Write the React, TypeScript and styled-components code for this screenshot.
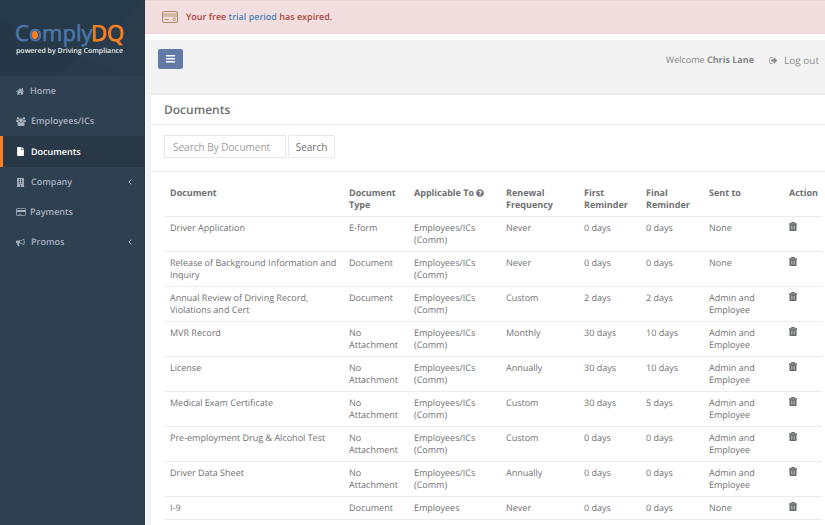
import React from "react";
import styled, { createGlobalStyle } from "styled-components";
import { FaFile, FaBuilding, FaQuestionCircle } from "react-icons/fa";

const GlobalStyle = createGlobalStyle`
  * { box-sizing: border-box; }
  html, body { margin: 0; height: 100%; overflow: hidden; }
  #root { height: 100%; }
  body {
    background: #fff;
    color: #6f7173;
    font-family: "Open Sans", "Noto Sans", sans-serif;
    font-size: 9px;
    line-height: 12px;
    text-rendering: geometricPrecision;
  }
  button, input { font: inherit; color: inherit; margin: 0; }
  a { text-decoration: none; color: inherit; }
`;

const Page = styled.div`
  display: flex;
  height: 100vh;
  overflow: hidden;
`;

const Sidebar = styled.aside`
  flex: 0 0 145px;
  background: #2f4050;
  border-right: 1px solid #26394a;
`;

const Brand = styled.header`
  height: 76px;
  padding: 20px 0 0 16px;
  background:
    linear-gradient(140deg, transparent 62%, rgba(255, 255, 255, 0.01) 62%),
    linear-gradient(25deg, rgba(0, 0, 0, 0.03) 40%, transparent 40%),
    #273a4a;
`;

const LogoSvg = styled.svg`
  display: block;
  width: 110px;
  height: 36px;
  overflow: visible;
`;

const NavList = styled.nav`
  display: flex;
  flex-direction: column;
`;

const NavItem = styled.a<{ $active?: boolean }>`
  display: flex;
  align-items: center;
  height: ${(p) => (p.$active ? 31 : 30)}px;
  padding: 0 12px 0 13px;
  border-left: 3px solid ${(p) => (p.$active ? "#f8811f" : "transparent")};
  background: ${(p) => (p.$active ? "#293846" : "transparent")};
  color: ${(p) => (p.$active ? "#fff" : "#a7b1c2")};
  font-weight: 600;
`;

const NavIcon = styled.span<{ $gap: number }>`
  display: flex;
  font-size: 9px;
  margin-right: ${(p) => p.$gap}px;
`;

const NavArrow = styled.span`
  display: flex;
  margin-left: auto;
`;

const Main = styled.main`
  flex: 1;
  min-width: 0;
  display: flex;
  flex-direction: column;
`;

const Alert = styled.div`
  display: flex;
  align-items: center;
  flex: none;
  height: 34px;
  padding: 0 17px;
  gap: 8px;
  background: #f2dede;
  border: solid #ebd3d6;
  border-width: 1px 0;
  color: #a94442;
  font-weight: 600;

  a { color: #4a7fb8; }
`;

const Content = styled.div`
  flex: 1;
  min-height: 0;
  margin: 6px 0 0 1px;
  padding-left: 5px;
  background: #f3f3f4;
`;

const TopBar = styled.div`
  display: flex;
  align-items: flex-start;
  justify-content: space-between;
  height: 53px;
  padding: 9px 6px 0 7px;
`;

const MenuButton = styled.button`
  display: flex;
  align-items: center;
  justify-content: center;
  width: 25px;
  height: 20px;
  padding: 0;
  border: 0;
  border-radius: 2px;
  background: #627aa5;
  color: #fff;
`;

const UserArea = styled.div`
  display: flex;
  align-items: center;
  gap: 15px;
  height: 22px;
  color: #888;
`;

const LogoutLink = styled.a`
  display: flex;
  align-items: center;
  gap: 6px;
  font-size: 10px;
  color: #8a8c8f;
`;

const Panel = styled.section`
  height: 100%;
  border-top: 2px solid #e7eaec;
  background: #fff;
`;

const PanelTitle = styled.h1`
  margin: 0;
  padding: 7px 13px 6px;
  border-bottom: 1px solid #e9ebed;
  font-size: 12px;
  line-height: 16px;
  font-weight: 600;
`;

const SearchForm = styled.form`
  display: flex;
  gap: 2px;
  padding: 10px 13px 13px;
  border-bottom: 1px solid #e9ebed;
  font-size: 10px;
`;

const SearchInput = styled.input`
  width: 122px;
  height: 23px;
  padding: 0 8px;
  border: 1px solid #e5e6e7;
  background: #fff;
  outline: 0;
  &::placeholder { color: #9a9c9e; opacity: 1; }
`;

const SearchButton = styled.button`
  height: 23px;
  width: 47px;
  padding: 0;
  border: 1px solid #e7eaec;
  border-radius: 2px;
  background: #fff;
`;

const TableWrap = styled.div`
  padding: 10px 3px 0 13px;
`;

const Table = styled.table`
  width: 100%;
  table-layout: fixed;
  border-collapse: separate;
  border-spacing: 0;

  th, td {
    padding: 5px 5px;
    text-align: left;
    vertical-align: top;
    border-bottom: 1px solid #ececee;
  }
  th { font-weight: 700; white-space: nowrap; }
  th:first-child, td:first-child { padding-left: 6px; }
  th svg { vertical-align: -1px; }
`;

const Col = styled.col<{ $width?: number }>`
  width: ${(p) => (p.$width ? `${p.$width}px` : "auto")};
`;

const DeleteButton = styled.button`
  display: block;
  padding: 0;
  border: 0;
  background: none;
  svg { display: block; }
`;

type GlyphProps = { d: string; size?: number; box?: number };
const Glyph = ({ d, size = 9, box = 1792 }: GlyphProps) => (
  <svg width={size} height={9} viewBox={`0 0 ${box} 1792`} fill="currentColor" aria-hidden="true">
    <path d={d} />
  </svg>
);

const HOME =
  "M1408 992v480q0 26-19 45t-45 19h-384v-384h-256v384h-384q-26 0-45-19t-19-45v-480q0-1 .5-3t.5-3l575-474 575 474q1 2 1 6zm223-69l-62 74q-8 9-21 11h-3q-13 0-21-7l-692-577-692 577q-12 8-24 7-13-2-21-11l-62-74q-8-10-7-23.5t11-21.5l719-599q32-26 76-26t76 26l244 204v-195q0-14 9-23t23-9h192q14 0 23 9t9 23v408l219 182q10 8 11 21.5t-7 23.5z";
const USERS =
  "M593 896q-162 5-265 128h-134q-82 0-138-40.5t-56-118.5q0-353 124-353 6 0 43.5 21t97.5 42.5 119 21.5q67 0 133-23-5 37-5 66 0 139 81 256zm1071 637q0 120-73 189.5t-194 69.5h-874q-121 0-194-69.5t-73-189.5q0-53 3.5-103.5t14-109 26.5-108.5 43-97.5 62-81 85.5-53.5 111.5-20q10 0 43 21.5t73 48 107 48 135 21.5 135-21.5 107-48 73-48 43-21.5q61 0 111.5 20t85.5 53.5 62 81 43 97.5 26.5 108.5 14 109 3.5 103.5zm-1024-1277q0 106-75 181t-181 75-181-75-75-181 75-181 181-75 181 75 75 181zm704 384q0 159-112.5 271.5t-271.5 112.5-271.5-112.5-112.5-271.5 112.5-271.5 271.5-112.5 271.5 112.5 112.5 271.5zm576 225q0 78-56 118.5t-138 40.5h-134q-103-123-265-128 81-117 81-256 0-29-5-66 66 23 133 23 59 0 119-21.5t97.5-42.5 43.5-21q124 0 124 353zm-128-609q0 106-75 181t-181 75-181-75-75-181 75-181 181-75 181 75 75 181z";
const BULLHORN =
  "M1664 640q53 0 90.5 37.5t37.5 90.5-37.5 90.5-90.5 37.5v384q0 52-38 90t-90 38q-417-347-812-380-58 19-91 66t-31 100.5 40 92.5q-20 33-23 65.5t6 58 33.5 55 48 50 61.5 50.5q-29 58-111.5 83t-168.5 11.5-132-55.5q-7-23-29.5-87.5t-32-94.5-23-89-15-101 3.5-98.5 22-110.5h-122q-66 0-113-47t-47-113v-192q0-66 47-113t113-47h480q435 0 896-384 52 0 90 38t38 90v384zm-128 604v-954q-394 302-768 343v270q377 42 768 341z";
const SIGN_OUT =
  "M704 1440q0 4 1 20t.5 26.5-3 23.5-10 19.5-20.5 6.5h-320q-119 0-203.5-84.5t-84.5-203.5v-704q0-119 84.5-203.5t203.5-84.5h320q13 0 22.5 9.5t9.5 22.5q0 4 1 20t.5 26.5-3 23.5-10 19.5-20.5 6.5h-320q-66 0-113 47t-47 113v704q0 66 47 113t113 47h312l11.5 1 11.5 3 8 5.5 7 9 2 13.5zm928-544q0 26-19 45l-544 544q-19 19-45 19t-45-19-19-45v-288h-448q-26 0-45-19t-19-45v-384q0-26 19-45t45-19h448v-288q0-26 19-45t45-19 45 19l544 544q19 19 19 45z";

const Logo = () => (
  <LogoSvg viewBox="0 0 110 36" role="img" aria-label="ComplyDQ, powered by Driving Compliance">
    <g fontFamily="Open Sans, sans-serif">
      <text x="-1" y="21" fontSize="22" fill="#4d74a8" stroke="#4d74a8" strokeWidth="0.6">Comply</text>
      <text x="75" y="21" fontSize="22" fill="#f8811f" stroke="#f8811f" strokeWidth="0.8">DQ</text>
      <text x="0" y="33" fontSize="7" fontWeight="600" fill="#e8ecf0">powered by Driving Compliance</text>
    </g>
    <ellipse cx="19" cy="15" rx="3" ry="4" fill="#f8811f" />
  </LogoSvg>
);

const CardIcon = () => (
  <svg width="16" height="12" viewBox="0 0 16 12" fill="none" stroke="#b58a66" aria-hidden="true">
    <rect x="0.5" y="0.5" width="15" height="11" rx="1.5" />
    <path d="M1 3h14M1 5h14" strokeWidth="0.9" />
    <path d="M2.5 8.5h4" />
    <circle cx="12.3" cy="8.3" r="1.3" strokeWidth="0.9" />
  </svg>
);

const PaymentIcon = () => (
  <svg width="10" height="8" viewBox="0 0 10 8" aria-hidden="true">
    <rect x="0.4" y="0.4" width="9.2" height="7.2" rx="0.8" fill="none" stroke="currentColor" strokeWidth="0.8" />
    <path d="M.5 2h9v2h-9zM1.5 5.7h1.2v.9H1.5zM3.3 5.7h2v.9h-2z" fill="currentColor" />
  </svg>
);

const ArrowIcon = () => (
  <svg width="4" height="6" viewBox="0 0 4 6" fill="none" stroke="currentColor" aria-hidden="true">
    <path d="M3.3.6L.9 3l2.4 2.4" />
  </svg>
);

const BarsIcon = () => (
  <svg width="9" height="8" viewBox="0 0 9 8" fill="currentColor" aria-hidden="true">
    <path d="M0 0h9v1.4H0zM0 3h9v1.4H0zM0 6h9v1.4H0z" />
  </svg>
);

const TrashIcon = () => (
  <svg width="8" height="9" viewBox="0 0 8 9" aria-hidden="true">
    <path d="M2.5 1.5V.5h3v1" fill="none" stroke="#66686a" />
    <path d="M0 1.3h8v1.4H0z" fill="#5f6163" />
    <path d="M.5 2.5h7V8.2q0 .8-.8.8H1.3Q.5 9 .5 8.2z" fill="#66686a" />
    <path d="M2.5 3.7v4M4 3.7v4M5.5 3.7v4" stroke="#c2c3c4" strokeWidth=".7" />
  </svg>
);

const nav = [
  { label: "Home", icon: <Glyph d={HOME} />, gap: 5 },
  { label: "Employees/ICs", icon: <Glyph d={USERS} size={10} box={1920} />, gap: 5 },
  { label: "Documents", icon: <FaFile />, gap: 6, active: true },
  { label: "Company", icon: <FaBuilding />, gap: 6, arrow: true },
  { label: "Payments", icon: <PaymentIcon />, gap: 4 },
  { label: "Promos", icon: <Glyph d={BULLHORN} />, gap: 6, arrow: true },
];

const COMM = "Employees/ICs (Comm)";
const BOTH = "Admin and Employee";
const rows = [
  ["Driver Application", "E-form", COMM, "Never", "0 days", "0 days", "None"],
  ["Release of Background Information and Inquiry", "Document", COMM, "Never", "0 days", "0 days", "None"],
  ["Annual Review of Driving Record, Violations and Cert", "Document", COMM, "Custom", "2 days", "2 days", BOTH],
  ["MVR Record", "No Attachment", COMM, "Monthly", "30 days", "10 days", BOTH],
  ["License", "No Attachment", COMM, "Annually", "30 days", "10 days", BOTH],
  ["Medical Exam Certificate", "No Attachment", COMM, "Custom", "30 days", "5 days", BOTH],
  ["Pre-employment Drug & Alcohol Test", "No Attachment", COMM, "Custom", "0 days", "0 days", BOTH],
  ["Driver Data Sheet", "No Attachment", COMM, "Annually", "0 days", "0 days", BOTH],
  ["I-9", "Document", "Employees", "Never", "0 days", "0 days", "None"],
  ["", "", "", "", "", "", ""],
];

export default function App() {
  return (
    <>
      <GlobalStyle />
      <Page>
        <Sidebar>
          <Brand><Logo /></Brand>
          <NavList>
            {nav.map((n) => (
              <NavItem key={n.label} href="#" $active={n.active}>
                <NavIcon $gap={n.gap}>{n.icon}</NavIcon>
                {n.label}
                {n.arrow && <NavArrow><ArrowIcon /></NavArrow>}
              </NavItem>
            ))}
          </NavList>
        </Sidebar>
        <Main>
          <Alert role="alert">
            <CardIcon />
            <span>Your free <a href="#">trial period</a> has expired.</span>
          </Alert>
          <Content>
            <TopBar>
              <MenuButton type="button" aria-label="Toggle menu"><BarsIcon /></MenuButton>
              <UserArea>
                <span>Welcome <b>Chris Lane</b></span>
                <LogoutLink href="#"><Glyph d={SIGN_OUT} />Log out</LogoutLink>
              </UserArea>
            </TopBar>
            <Panel>
              <PanelTitle>Documents</PanelTitle>
              <SearchForm onSubmit={(e) => e.preventDefault()}>
                <SearchInput type="text" placeholder="Search By Document" aria-label="Search By Document" />
                <SearchButton type="submit">Search</SearchButton>
              </SearchForm>
              <TableWrap>
                <Table>
                  <colgroup>
                    <Col />
                    <Col $width={65} />
                    <Col $width={92} />
                    <Col $width={78} />
                    <Col $width={62} />
                    <Col $width={63} />
                    <Col $width={80} />
                    <Col $width={38} />
                  </colgroup>
                  <thead>
                    <tr>
                      <th>Document</th>
                      <th>Document<br />Type</th>
                      <th>Applicable To <FaQuestionCircle size={8} /></th>
                      <th>Renewal<br />Frequency</th>
                      <th>First<br />Reminder</th>
                      <th>Final<br />Reminder</th>
                      <th>Sent to</th>
                      <th>Action</th>
                    </tr>
                  </thead>
                  <tbody>
                    {rows.map((r, i) => (
                      <tr key={i}>
                        {r.map((c, j) => <td key={j}>{c}</td>)}
                        <td><DeleteButton type="button" aria-label={`Delete ${r[0]}`}><TrashIcon /></DeleteButton></td>
                      </tr>
                    ))}
                  </tbody>
                </Table>
              </TableWrap>
            </Panel>
          </Content>
        </Main>
      </Page>
    </>
  );
}
